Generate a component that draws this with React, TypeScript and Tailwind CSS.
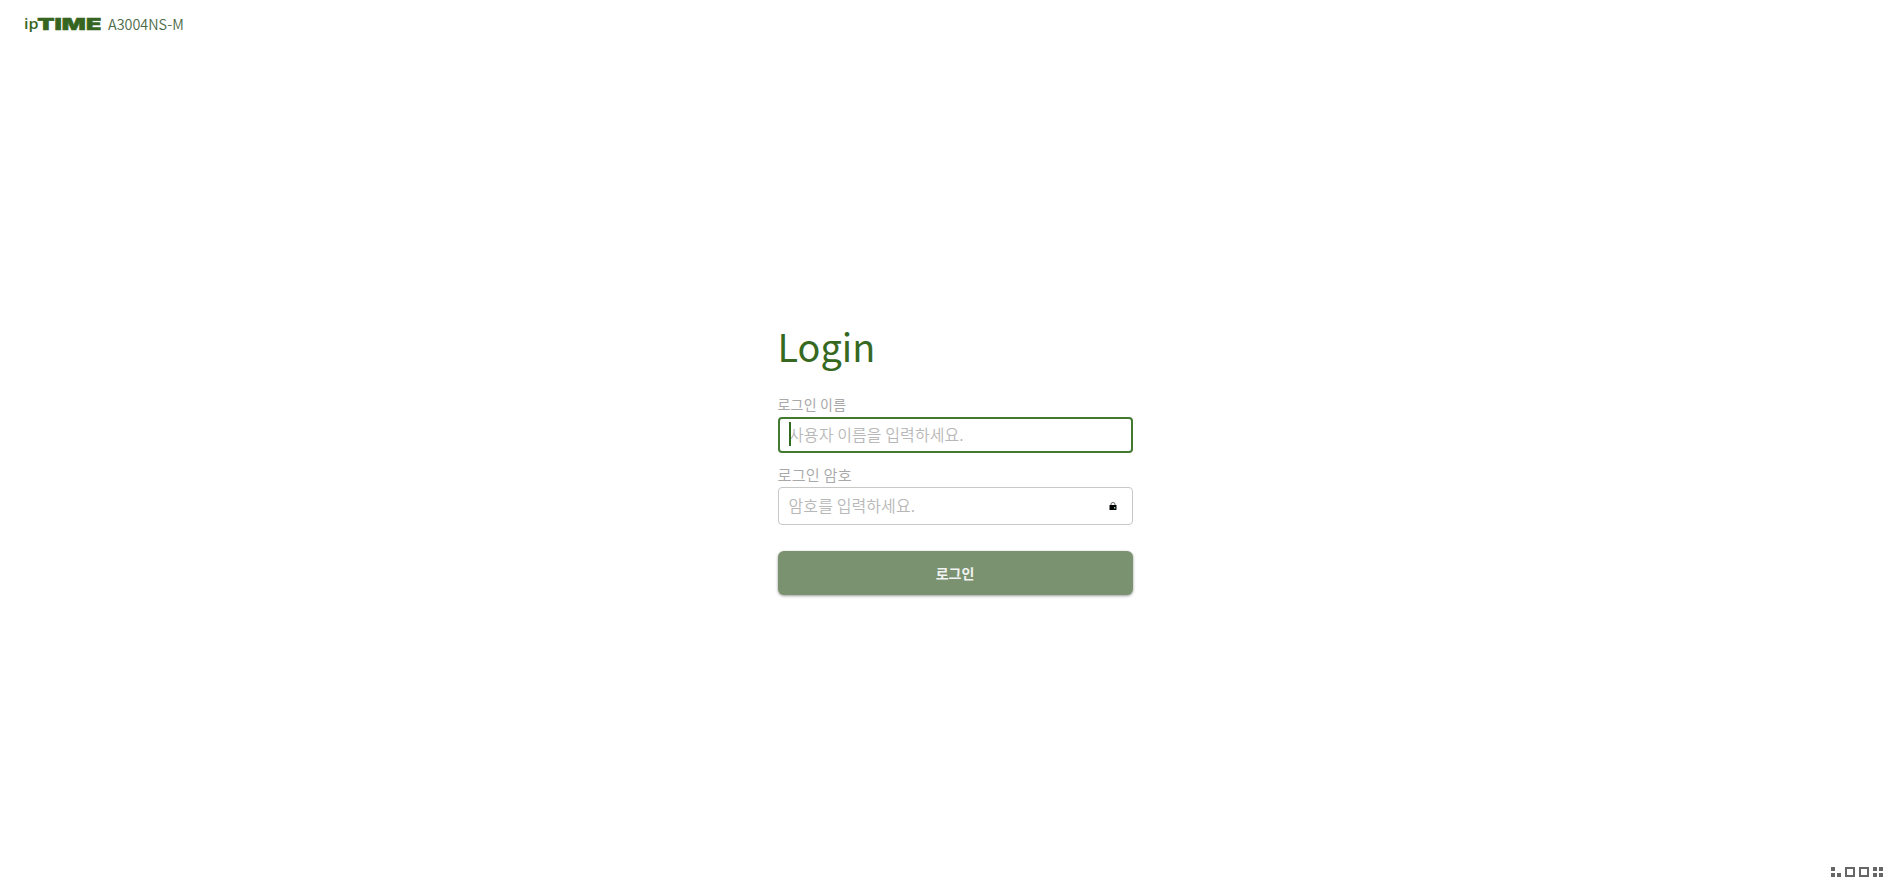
import React from 'react';

type FieldProps = {
    id: string;
    label: string;
    labelClass: string;
    placeholder: string;
    focused?: boolean;
    children?: React.ReactNode;
};

function Logo() {
    return (
        <svg width="78" height="24" viewBox="0 0 78 24" fill="#36651f" aria-label="ipTIME">
            <text x="0" y="17.3" fontFamily="'Open Sans', sans-serif" fontSize="15" fontWeight="600" textLength="14.5" lengthAdjust="spacingAndGlyphs">ip</text>
            <text x="13.3" y="17.6" fontFamily="Inter, sans-serif" fontSize="16.4" fontWeight="900" stroke="#36651f" strokeWidth="0.5" textLength="64" lengthAdjust="spacingAndGlyphs">TIME</text>
        </svg>
    );
}

function LockIcon() {
    return (
        <svg width="8" height="9" viewBox="0 0 8 9" fill="none">
            <path d="M2 4V2Q2 .5 4 .5T6 2V4" stroke="#555" strokeWidth="0.9" />
            <rect x="0.5" y="3" width="7" height="5" rx="0.5" fill="#000" />
            <rect x="5" y="5" width="1.3" height="1.5" fill="#9cc" />
        </svg>
    );
}

function MenuMark() {
    return (
        <svg width="52" height="10" viewBox="0 0 52 10" fill="#666" shapeRendering="crispEdges">
            <path d="M0 0h4v4H0zM0 6h4v4H0zM6 6h4v4H6z" />
            <path d="M15 1h8v8h-8zM29 1h8v8h-8z" fill="none" stroke="#666" strokeWidth="2" />
            <path d="M42 0h4v4h-4zM48 0h4v4h-4zM42 6h4v4h-4zM48 6h4v4h-4z" />
        </svg>
    );
}

function Field(props: FieldProps) {
    const { id, label, labelClass, placeholder, focused, children } = props;

    return (
        <div>
            <label htmlFor={id} className={"block h-6 leading-[22px] text-[#a8a8a8] " + labelClass}>{label}</label>
            <div className={"relative flex items-center rounded-[4px] pr-[15px] " + (focused ? "h-9 border-2 border-[#427a32] pl-[9.5px]" : "h-[38px] border border-[#c8c8c8] pl-[10px]")}>
                {focused && <span className="absolute left-[9.5px] top-[3px] h-6 w-0.5 bg-[#2f6a1f]" />}
                <input id={id} className="h-[26px] w-full min-w-0 flex-1 bg-transparent pb-0.5 text-[16px] font-[350] leading-6 tracking-[0.1px] outline-none placeholder:text-[#b8b8b8]" placeholder={placeholder} />
                {children}
            </div>
        </div>
    );
}

export default function App() {
    return (
        <div className="flex h-screen flex-col bg-white font-['Noto_Sans_CJK_KR',sans-serif]">
            <header className="flex h-12 items-center pl-6">
                <Logo />
                <span className="ml-[6px] pb-px text-[14.4px] font-[350] leading-6 text-[#4d6a48]">A3004NS-M</span>
            </header>

            <main className="flex flex-1 justify-center pl-[6px] pt-[269px]">
                <form className="w-[355px]">
                    <h1 className="h-[76px] text-[37.8px] leading-[58px] text-[#36691f]">Login</h1>
                    <Field id="username" label="로그인 이름" labelClass="text-[14px] tracking-[0.2px]" placeholder="사용자 이름을 입력하세요." focused />
                    <div className="mt-[10px]">
                        <Field id="password" label="로그인 암호" labelClass="text-[15.2px] font-[350] tracking-[0.2px]" placeholder="암호를 입력하세요.">
                            <LockIcon />
                        </Field>
                    </div>
                    <button type="button" className="mt-[26px] block h-11 w-full rounded-[6px] bg-[#7a9270] text-[14px] font-bold text-[#f2f2f2] shadow-[0_1px_3px_rgba(0,0,0,0.4)]">로그인</button>
                </form>
            </main>

            <footer className="flex justify-end pb-[13px] pr-[21px]">
                <MenuMark />
            </footer>
        </div>
    );
}
